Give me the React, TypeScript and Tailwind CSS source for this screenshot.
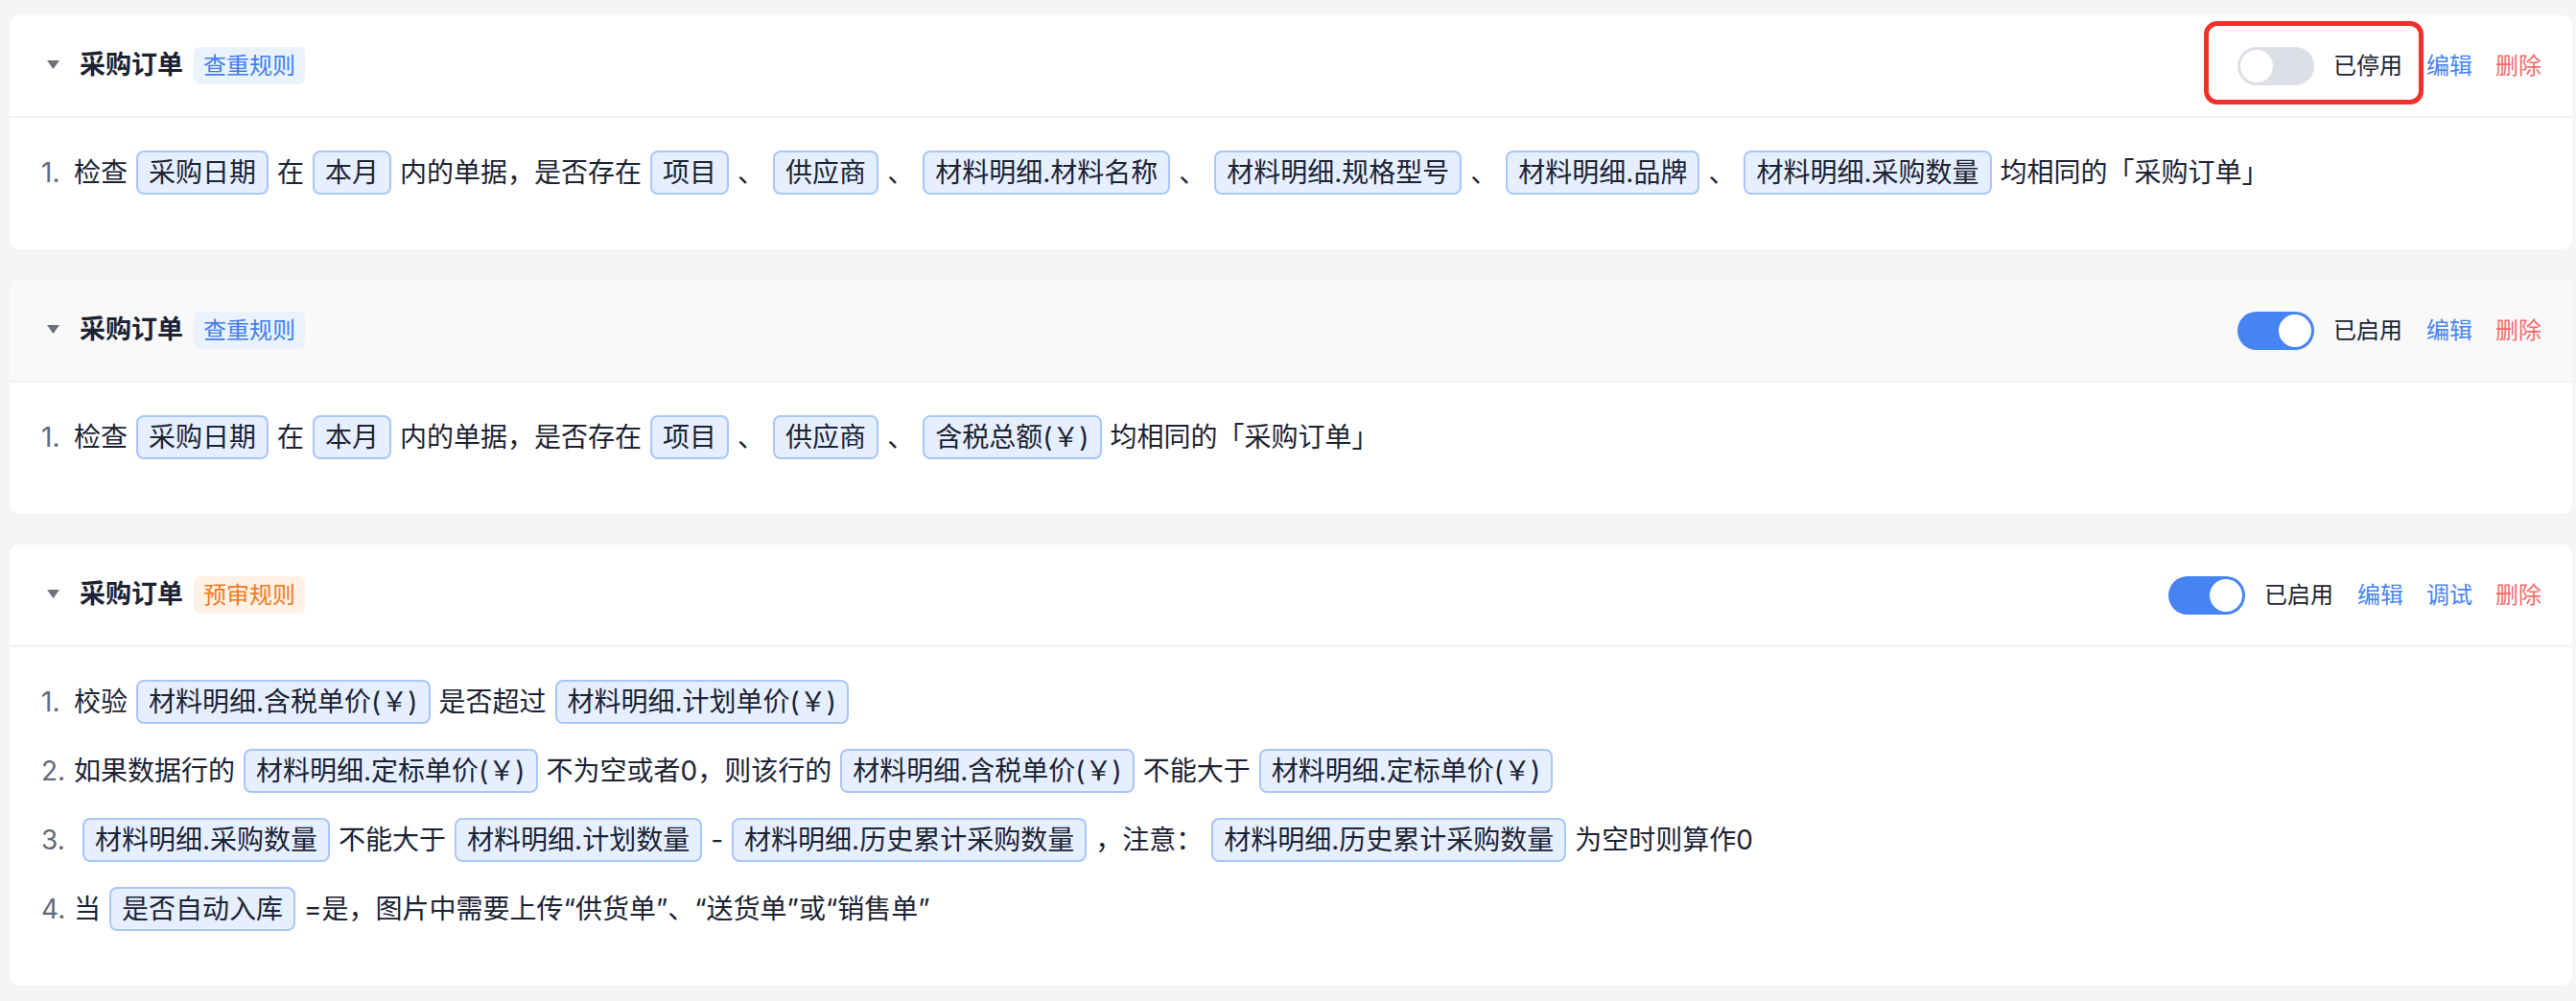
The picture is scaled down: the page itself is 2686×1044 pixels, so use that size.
import React from "react";

type Seg = { t: string; chip?: boolean; extra?: boolean };

const FONT = { fontFamily: 'Inter, "Noto Sans CJK SC", sans-serif' };

function Chip({ children, extra }: { children: React.ReactNode; extra?: boolean }) {
  return (
    <span
      className={
        "inline-flex items-center h-[46px] px-[11px] border-2 border-[#a9c6fa] bg-[#e6efff] rounded-[8px] text-[#1c2333] whitespace-nowrap " +
        (extra ? "ml-[9px]" : "")
      }
    >
      {children}
    </span>
  );
}

function Row({ n, segs }: { n: string; segs: Seg[] }) {
  return (
    <div className="flex items-center h-[46px] gap-[9px] text-[28px] text-[#1c2333] whitespace-nowrap">
      <span className="w-[25px] text-[#626a7a]">{n}</span>
      {segs.map((s, i) =>
        s.chip ? (
          <Chip key={i} extra={s.extra}>
            {s.t}
          </Chip>
        ) : (
          <span key={i}>{s.t}</span>
        )
      )}
    </div>
  );
}

function Toggle({ on }: { on: boolean }) {
  return (
    <div
      className={
        "w-[80px] h-[40px] rounded-full flex items-center px-[3px] " +
        (on ? "bg-[#4684f4] justify-end" : "bg-[#dcdfe6] justify-start")
      }
    >
      <div className="w-[34px] h-[34px] rounded-full bg-white" />
    </div>
  );
}

function Card({
  tag,
  orange,
  on,
  highlight,
  debug,
  grayHeader,
  rows,
}: {
  tag: string;
  orange?: boolean;
  on: boolean;
  highlight?: boolean;
  debug?: boolean;
  grayHeader?: boolean;
  rows: { n: string; segs: Seg[] }[];
}) {
  return (
    <div className="bg-white rounded-[10px] overflow-hidden">
      <div
        className={
          "h-[107px] flex items-center pl-[39px] pr-[32px] border-b-2 border-[#f0f1f3] " +
          (grayHeader ? "bg-[#f9f9fa]" : "bg-white")
        }
      >
        <svg width="13" height="9" viewBox="0 0 13 9" className="mt-[-2px]">
          <path d="M0 0 L13 0 L6.5 9 Z" fill="#6b7180" />
        </svg>
        <span className="ml-[21px] text-[27px] font-bold text-[#1c2333]">采购订单</span>
        <span
          className={
            "ml-[11px] h-[39px] px-[10px] rounded-[6px] flex items-center text-[24px] " +
            (orange ? "bg-[#fff1e6] text-[#f07c1a]" : "bg-[#eaf2fe] text-[#3f7ef0]")
          }
        >
          {tag}
        </span>
        <div className="flex-1" />
        <div className="relative flex items-center">
          <Toggle on={on} />
          <span className="ml-[20px] text-[24px] text-[#1c2333]">{on ? "已启用" : "已停用"}</span>
          {highlight && (
            <div className="absolute top-[-27px] bottom-[-20px] left-[-35px] right-[-22px] border-[5px] border-[#f0302a] rounded-[14px]" />
          )}
        </div>
        <div className="ml-[25px] flex items-center gap-[24px] text-[24px]">
          <span className="text-[#4684f4]">编辑</span>
          {debug && <span className="text-[#4684f4]">调试</span>}
          <span className="text-[#f26b6b]">删除</span>
        </div>
      </div>
      <div className="pt-[34px] pb-[57px] pl-[33px] flex flex-col gap-[26px]">
        {rows.map((r, i) => (
          <Row key={i} n={r.n} segs={r.segs} />
        ))}
      </div>
    </div>
  );
}

export default function App() {
  return (
    <div style={FONT} className="min-h-screen bg-[#f4f5f7] pt-[16px] pb-[16px] pl-[10px] pr-[4px] flex flex-col gap-[32px]">
      <Card
        tag="查重规则"
        on={false}
        highlight
        rows={[
          {
            n: "1.",
            segs: [
              { t: "检查" },
              { t: "采购日期", chip: true },
              { t: "在" },
              { t: "本月", chip: true },
              { t: "内的单据，是否存在" },
              { t: "项目", chip: true },
              { t: "、" },
              { t: "供应商", chip: true },
              { t: "、" },
              { t: "材料明细.材料名称", chip: true },
              { t: "、" },
              { t: "材料明细.规格型号", chip: true },
              { t: "、" },
              { t: "材料明细.品牌", chip: true },
              { t: "、" },
              { t: "材料明细.采购数量", chip: true },
              { t: "均相同的「采购订单」" },
            ],
          },
        ]}
      />
      <Card
        tag="查重规则"
        on
        grayHeader
        rows={[
          {
            n: "1.",
            segs: [
              { t: "检查" },
              { t: "采购日期", chip: true },
              { t: "在" },
              { t: "本月", chip: true },
              { t: "内的单据，是否存在" },
              { t: "项目", chip: true },
              { t: "、" },
              { t: "供应商", chip: true },
              { t: "、" },
              { t: "含税总额(￥)", chip: true },
              { t: "均相同的「采购订单」" },
            ],
          },
        ]}
      />
      <Card
        tag="预审规则"
        orange
        on
        debug
        rows={[
          {
            n: "1.",
            segs: [
              { t: "校验" },
              { t: "材料明细.含税单价(￥)", chip: true },
              { t: "是否超过" },
              { t: "材料明细.计划单价(￥)", chip: true },
            ],
          },
          {
            n: "2.",
            segs: [
              { t: "如果数据行的" },
              { t: "材料明细.定标单价(￥)", chip: true },
              { t: "不为空或者0，则该行的" },
              { t: "材料明细.含税单价(￥)", chip: true },
              { t: "不能大于" },
              { t: "材料明细.定标单价(￥)", chip: true },
            ],
          },
          {
            n: "3.",
            segs: [
              { t: "材料明细.采购数量", chip: true, extra: true },
              { t: "不能大于" },
              { t: "材料明细.计划数量", chip: true },
              { t: "-" },
              { t: "材料明细.历史累计采购数量", chip: true },
              { t: "，注意：" },
              { t: "材料明细.历史累计采购数量", chip: true },
              { t: "为空时则算作0" },
            ],
          },
          {
            n: "4.",
            segs: [
              { t: "当" },
              { t: "是否自动入库", chip: true },
              { t: "=是，图片中需要上传“供货单”、“送货单”或“销售单”" },
            ],
          },
        ]}
      />
    </div>
  );
}
